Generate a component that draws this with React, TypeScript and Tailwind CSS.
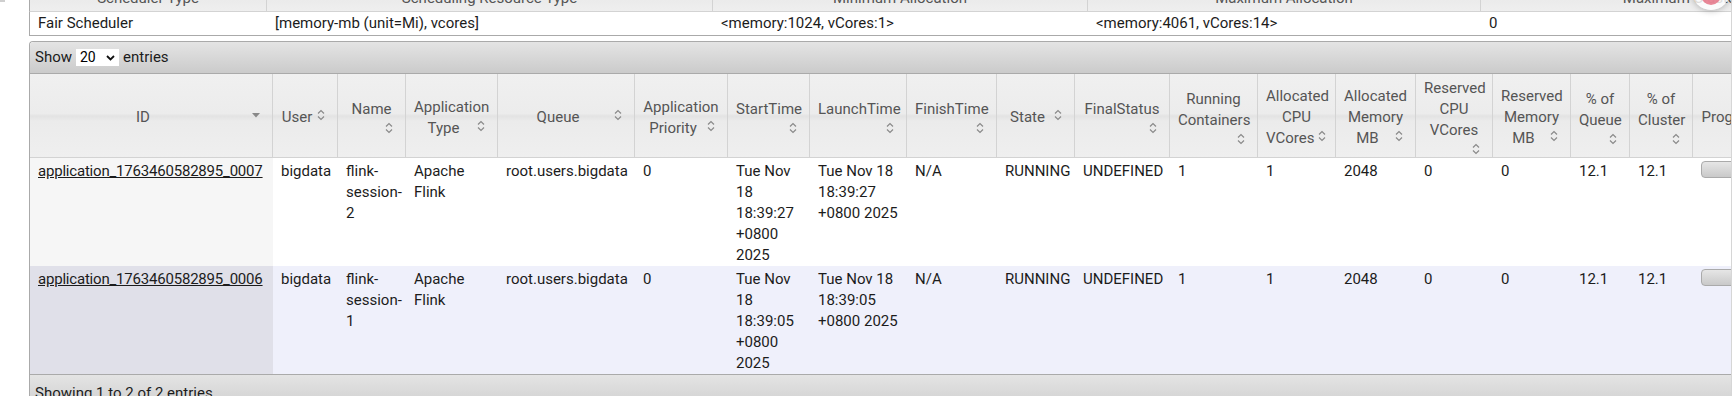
import React from "react";

type Head = { lines: string[]; w: string; icon: "inline" | "below" | "sorted" | "none" };

const heads: Head[] = [
  { lines: ["ID"], w: "w-[243px]", icon: "sorted" },
  { lines: ["User"], w: "w-[65px]", icon: "inline" },
  { lines: ["Name"], w: "w-[68px]", icon: "below" },
  { lines: ["Application", "Type"], w: "w-[92px]", icon: "inline" },
  { lines: ["Queue"], w: "w-[137px]", icon: "inline" },
  { lines: ["Application", "Priority"], w: "w-[93px]", icon: "inline" },
  { lines: ["StartTime"], w: "w-[82px]", icon: "below" },
  { lines: ["LaunchTime"], w: "w-[97px]", icon: "below" },
  { lines: ["FinishTime"], w: "w-[90px]", icon: "below" },
  { lines: ["State"], w: "w-[78px]", icon: "inline" },
  { lines: ["FinalStatus"], w: "w-[95px]", icon: "below" },
  { lines: ["Running", "Containers"], w: "w-[88px]", icon: "below" },
  { lines: ["Allocated", "CPU", "VCores"], w: "w-[78px]", icon: "inline" },
  { lines: ["Allocated", "Memory", "MB"], w: "w-[80px]", icon: "inline" },
  { lines: ["Reserved", "CPU", "VCores"], w: "w-[77px]", icon: "below" },
  { lines: ["Reserved", "Memory", "MB"], w: "w-[78px]", icon: "inline" },
  { lines: ["% of", "Queue"], w: "w-[59px]", icon: "below" },
  { lines: ["% of", "Cluster"], w: "w-[63px]", icon: "below" },
  { lines: ["Progress"], w: "w-[94px]", icon: "inline" },
];

const apps = [
  {
    id: "application_1763460582895_0007",
    name: ["flink-", "session-", "2"],
    start: ["Tue Nov", "18", "18:39:27", "+0800", "2025"],
    launch: ["Tue Nov 18", "18:39:27", "+0800 2025"],
    even: false,
  },
  {
    id: "application_1763460582895_0006",
    name: ["flink-", "session-", "1"],
    start: ["Tue Nov", "18", "18:39:05", "+0800", "2025"],
    launch: ["Tue Nov 18", "18:39:05", "+0800 2025"],
    even: true,
  },
];

const glass =
  "bg-[linear-gradient(to_bottom,#f0f0f0_0%,#ececec_47%,#e3e3e3_50%,#ebebeb_56%,#efefef_100%)]";
const bar = "bg-[linear-gradient(to_bottom,#e6e6e6_0%,#d6d6d6_55%,#c9c9c9_100%)]";

function Carat() {
  return (
    <svg width="8" height="12" viewBox="0 0 8 12">
      <path d="M1 4.5 L4 1.5 L7 4.5 M1 7.5 L4 10.5 L7 7.5" fill="none" stroke="#8a8a8a" strokeWidth="1.2" />
    </svg>
  );
}

function SortedDown() {
  return (
    <svg width="8" height="5" viewBox="0 0 8 5">
      <path d="M0 0 L8 0 L4 4.5 Z" fill="#888" />
    </svg>
  );
}

function HeadCell({ h }: { h: Head }) {
  const last = h.lines.length - 1;
  return (
    <th className={`${h.w} h-[84px] border-r border-b border-[#d3d3d3] px-2 pt-[4px] align-middle font-normal text-[#555]`}>
      <div className="flex flex-col justify-center">
        {h.lines.map((line, i) =>
          i === last && h.icon !== "below" && h.icon !== "none" ? (
            <div key={line} className="flex items-start">
              <span className="flex-1 whitespace-nowrap text-center">{line}</span>
              <span className="flex h-4 w-4 shrink-0 items-center justify-center">
                {h.icon === "sorted" ? <SortedDown /> : <Carat />}
              </span>
            </div>
          ) : (
            <div key={line} className="whitespace-nowrap text-center">
              {line}
            </div>
          )
        )}
        {h.icon === "below" && (
          <div className="flex h-4 justify-end">
            <span className="flex h-4 w-4 items-center justify-center">
              <Carat />
            </span>
          </div>
        )}
      </div>
    </th>
  );
}

function Cell({ lines, bg }: { lines: string[]; bg?: string }) {
  return (
    <td className={`pl-2 pr-1 pt-[3px] align-top ${bg ?? ""}`}>
      {lines.map((l, i) => (
        <div key={i} className="whitespace-nowrap">
          {l}
        </div>
      ))}
    </td>
  );
}

export default function App() {
  return (
    <div className="relative h-[396px] w-[1734px] overflow-hidden bg-white font-[family-name:Roboto,sans-serif] text-[15px] leading-[21px] text-[#1c1c1c]">
      <div className="absolute left-0 top-0 h-[2px] w-[5px] bg-[#cfcfcf]" />

      <div className="ml-[29px] w-[1703px] overflow-hidden border-r border-[#d6d6d6]">
        {/* scheduler summary */}
        <table className="-mt-[15px] w-[1984px] table-fixed border-separate border-spacing-0">
          <colgroup>
            <col className="w-[238px]" />
            <col className="w-[446px]" />
            <col className="w-[375px]" />
            <col className="w-[393px]" />
            <col className="w-[532px]" />
          </colgroup>
          <thead>
            <tr className={glass}>
              <th className="h-[27px] border-l border-b border-r border-l-[#aaa] border-[#d3d3d3] text-center font-normal text-[#555]">Scheduler Type</th>
              <th className="border-b border-r border-[#d3d3d3] text-center font-normal text-[#555]">Scheduling Resource Type</th>
              <th className="border-b border-r border-[#d3d3d3] text-center font-normal text-[#555]">Minimum Allocation</th>
              <th className="border-b border-r border-[#d3d3d3] text-center font-normal text-[#555]">Maximum Allocation</th>
              <th className="border-b border-[#d3d3d3] text-center font-normal text-[#555]">Maximum Cluster Application Priority</th>
            </tr>
          </thead>
          <tbody>
            <tr>
              <td className="h-[24px] border-b border-l border-[#aaa] pl-2">Fair Scheduler</td>
              <td className="border-b border-[#aaa] pl-2">[memory-mb (unit=Mi), vcores]</td>
              <td className="border-b border-[#aaa] pl-2">&lt;memory:1024, vCores:1&gt;</td>
              <td className="border-b border-[#aaa] pl-2">&lt;memory:4061, vCores:14&gt;</td>
              <td className="border-b border-[#aaa] pl-2">0</td>
            </tr>
          </tbody>
        </table>

        {/* applications table */}
        <div className="mt-[5px] rounded-tl-[4px] border-l border-t border-[#aaa]">
          <div className="flex h-[32px] items-center gap-[4px] rounded-tl-[4px] border-b border-[#aaa] bg-[linear-gradient(to_bottom,#e4e4e4,#cbcbcb)] pl-[5px]">
            <span>Show</span>
            <span className="flex h-[17px] w-[43px] items-center justify-between bg-white pl-[4px] pr-[4px] text-[14px] text-black">
              20
              <svg width="9" height="6" viewBox="0 0 9 6">
                <path d="M1 1 L4.5 4.5 L8 1" fill="none" stroke="#111" strokeWidth="1.8" />
              </svg>
            </span>
            <span>entries</span>
          </div>

          <table className="w-[1757px] table-fixed border-separate border-spacing-0">
            <thead>
              <tr className={glass}>
                {heads.map((h) => (
                  <HeadCell key={h.lines.join(" ") + h.w} h={h} />
                ))}
              </tr>
            </thead>
            <tbody>
              {apps.map((a) => {
                const rowBg = a.even ? "bg-[#eff0fb]" : "bg-white";
                const idBg = a.even ? "bg-[#e0e0e9]" : "bg-[#f6f6f6]";
                return (
                  <tr key={a.id} className={`${rowBg} h-[108px]`}>
                    <td className={`${idBg} pl-2 pt-[3px] align-top`}>
                      <a href="#" className="whitespace-nowrap tracking-[-0.2px] text-[#1c1c1c] underline">
                        {a.id}
                      </a>
                    </td>
                    <Cell lines={["bigdata"]} />
                    <Cell lines={a.name} />
                    <Cell lines={["Apache", "Flink"]} />
                    <Cell lines={["root.users.bigdata"]} />
                    <Cell lines={["0"]} />
                    <Cell lines={a.start} />
                    <Cell lines={a.launch} />
                    <Cell lines={["N/A"]} />
                    <Cell lines={["RUNNING"]} />
                    <Cell lines={["UNDEFINED"]} />
                    <Cell lines={["1"]} />
                    <Cell lines={["1"]} />
                    <Cell lines={["2048"]} />
                    <Cell lines={["0"]} />
                    <Cell lines={["0"]} />
                    <Cell lines={["12.1"]} />
                    <Cell lines={["12.1"]} />
                    <td className="pl-2 pt-[3px] align-top">
                      <div className={`h-[17px] w-[120px] rounded-[4px] border border-[#aaa] ${bar}`} />
                    </td>
                  </tr>
                );
              })}
            </tbody>
          </table>

          <div className="h-[40px] border-t border-[#aaa] bg-[linear-gradient(to_bottom,#e4e4e4,#cbcbcb)] pl-[5px] pt-[8px]">
            Showing 1 to 2 of 2 entries
          </div>
        </div>
      </div>

      {/* floating widget cut off at the top edge */}
      <div className="absolute left-[1692px] top-[-28px] flex h-[38px] w-[38px] items-center justify-center rounded-full bg-white/80 shadow-[0_1px_6px_rgba(0,0,0,0.25)]">
        <div className="mt-[8px] h-[20px] w-[20px] rounded-full bg-[#e56b80]/80" />
      </div>
    </div>
  );
}
